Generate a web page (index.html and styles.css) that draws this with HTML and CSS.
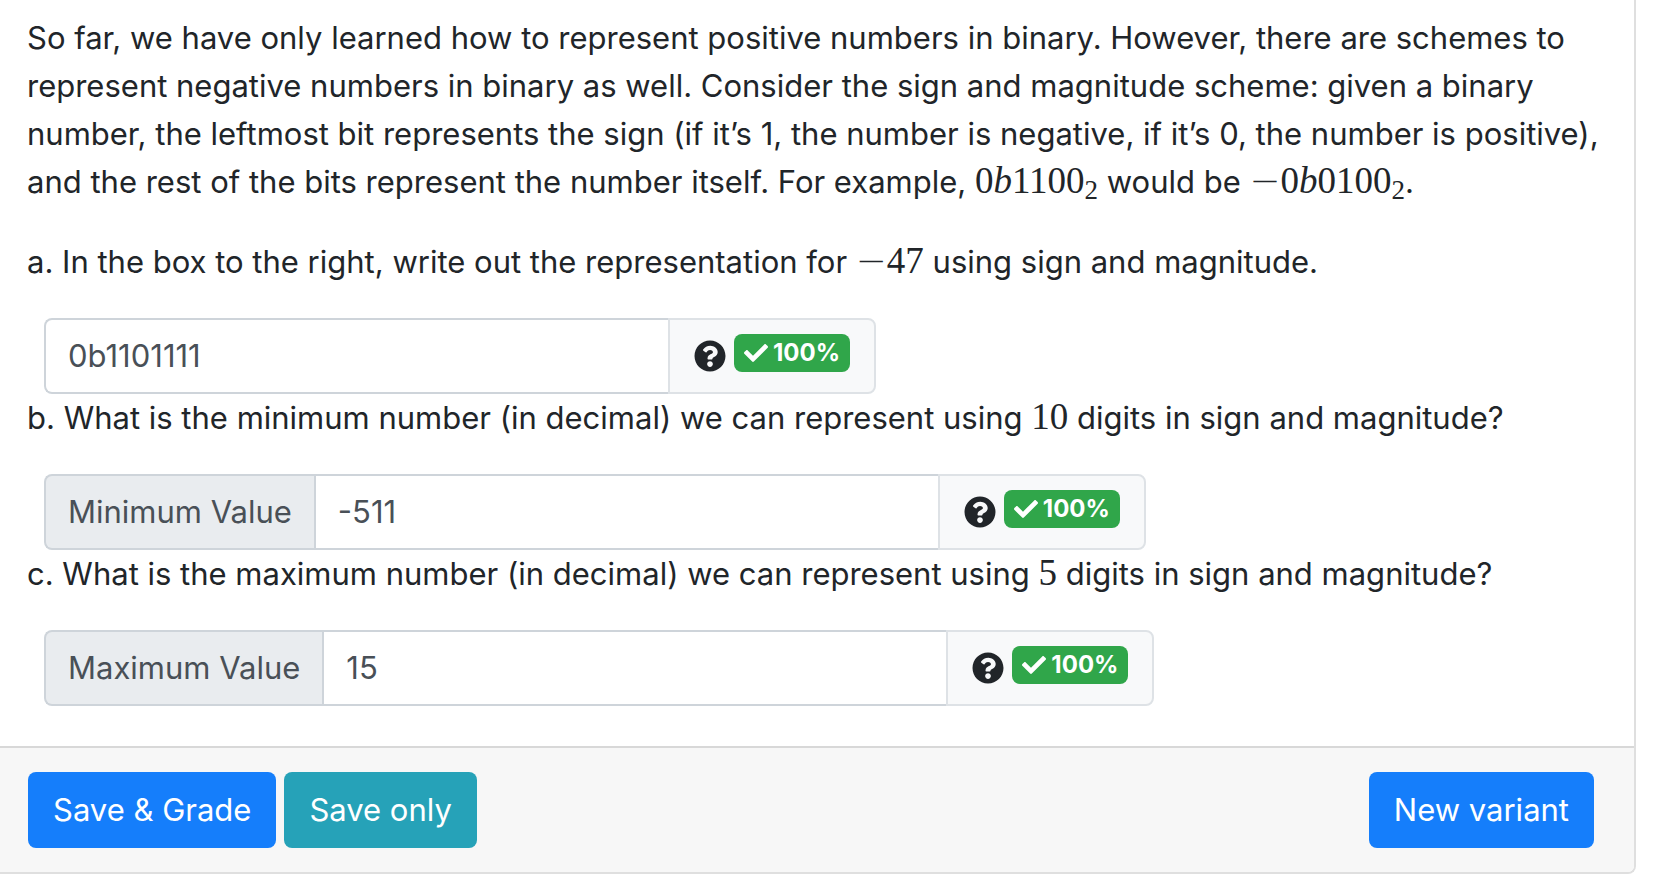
FILE: index.html
```
<!DOCTYPE html>
<html lang="en">
<head>
<meta charset="utf-8">
<title>Sign and magnitude</title>
<link rel="stylesheet" href="styles.css">
</head>
<body>
<svg class="sprite" aria-hidden="true">
  <symbol id="question" viewBox="0 0 512 512"><path d="M504 256c0 136.997-111.043 248-248 248S8 392.997 8 256C8 119.083 119.043 8 256 8s248 111.083 248 248zM262.655 90c-54.497 0-89.255 22.957-116.549 63.758-3.536 5.286-2.353 12.415 2.715 16.258l34.699 26.31c5.205 3.947 12.621 3.008 16.665-2.122 17.864-22.658 30.113-35.797 57.303-35.797 20.429 0 45.698 13.148 45.698 32.958 0 14.976-12.363 22.667-32.534 33.976C247.128 238.528 216 254.941 216 296v4c0 6.627 5.373 12 12 12h56c6.627 0 12-5.373 12-12v-1.333c0-28.462 83.186-29.647 83.186-106.667 0-58.002-60.165-102-116.531-102zM256 338c-25.365 0-46 20.635-46 46 0 25.364 20.635 46 46 46s46-20.636 46-46c0-25.365-20.635-46-46-46z"/></symbol>
  <symbol id="check" viewBox="0 0 512 512"><path d="M173.898 439.404l-166.4-166.4c-9.997-9.997-9.997-26.206 0-36.204l36.203-36.204c9.997-9.998 26.207-9.998 36.204 0L192 312.69 432.095 72.596c9.997-9.997 26.207-9.997 36.204 0l36.203 36.204c9.997 9.997 9.997 26.206 0 36.204l-294.4 294.401c-9.998 9.997-26.207 9.997-36.204-.001z"/></symbol>
</svg>
<form class="card">
  <div class="card-body">
    <p class="text">So far, we have only learned how to represent positive numbers in binary. However, there are schemes to represent negative numbers in binary as well. Consider the sign and magnitude scheme: given a binary number, the leftmost bit represents the sign (if it’s 1, the number is negative, if it’s 0, the number is positive), and the rest of the bits represent the number itself. For example, <span class="math">0<i>b</i>1100<sub>2</sub></span> would be <span class="math"><span class="minus">−</span>0<i>b</i>0100<sub>2</sub></span>.</p>

    <p class="text" id="qa">a. In the box to the right, write out the representation for <span class="math"><span class="minus">−</span>47</span> using sign and magnitude.</p>
    <div class="group">
      <input class="field" type="text" value="0b1101111" aria-labelledby="qa">
      <span class="suffix">
        <button class="help" type="button" aria-label="Help"><svg class="icon"><use href="#question"/></svg></button>
        <span class="badge"><svg class="check"><use href="#check"/></svg>100%</span>
      </span>
    </div>

    <p class="text">b. What is the minimum number (in decimal) we can represent using <span class="math">10</span> digits in sign and magnitude?</p>
    <div class="group">
      <label class="prefix" for="min">Minimum Value</label>
      <input class="field" type="text" id="min" value="-511">
      <span class="suffix">
        <button class="help" type="button" aria-label="Help"><svg class="icon"><use href="#question"/></svg></button>
        <span class="badge"><svg class="check"><use href="#check"/></svg>100%</span>
      </span>
    </div>

    <p class="text">c. What is the maximum number (in decimal) we can represent using <span class="math">5</span> digits in sign and magnitude?</p>
    <div class="group">
      <label class="prefix" for="max">Maximum Value</label>
      <input class="field" type="text" id="max" value="15">
      <span class="suffix">
        <button class="help" type="button" aria-label="Help"><svg class="icon"><use href="#question"/></svg></button>
        <span class="badge"><svg class="check"><use href="#check"/></svg>100%</span>
      </span>
    </div>
  </div>
  <div class="card-footer">
    <button class="btn primary" type="button">Save &amp; Grade</button>
    <button class="btn info" type="button">Save only</button>
    <button class="btn primary last" type="button">New variant</button>
  </div>
</form>
</body>
</html>
```
FILE: styles.css
```
* { box-sizing: border-box; }

body {
  margin: 0;
  background: #fff;
  color: #212529;
  font-family: Inter, sans-serif;
  font-size: 31px;
  line-height: 48px;
}

.sprite { display: none; }

.card {
  margin-right: 24px;
  border-right: 2px solid #dfdfdf;
  border-bottom: 2px solid #dfdfdf;
  border-bottom-right-radius: 8px;
}

.card-body { padding: 14px 24px 40px 27px; }

.text { margin: 0 0 32px; }

.math {
  font-family: "Liberation Serif", serif;
  font-size: 37px;
  line-height: 37px;
  white-space: nowrap;
}

.math sub {
  font-size: 27px;
  line-height: 27px;
  vertical-align: -6px;
}

.minus {
  font-family: "DejaVu Sans", sans-serif;
  font-weight: 200;
}

.group {
  display: flex;
  width: fit-content;
  height: 76px;
  margin-left: 17px;
}

.prefix, .field, .suffix {
  border: 2px solid #ced4da;
  color: #495057;
}

.prefix {
  display: flex;
  align-items: center;
  padding: 0 22px;
  background: #e9ecef;
  border-right: 0;
  border-radius: 8px 0 0 8px;
}

.field {
  width: 624px;
  padding: 0 22px;
  background: #fff;
  border-right: 0;
  border-radius: 0;
  font: inherit;
}

.field:first-child { border-radius: 8px 0 0 8px; }

.suffix {
  display: flex;
  gap: 8px;
  padding: 14px 24px;
  background: #f8f9fa;
  border-color: #dee2e6;
  border-radius: 0 8px 8px 0;
}

.help {
  display: flex;
  padding: 6px 0 0;
  border: 0;
  background: none;
  color: #212529;
}

.icon {
  width: 32px;
  height: 32px;
  fill: currentColor;
}

.badge {
  display: flex;
  align-items: center;
  gap: 5px;
  height: 38px;
  padding: 0 10px;
  border-radius: 8px;
  background: #30a64a;
  color: #fff;
  font-size: 24px;
  font-weight: 700;
  line-height: 24px;
}

.check {
  width: 24px;
  height: 24px;
  fill: currentColor;
}

.card-footer {
  display: flex;
  gap: 8px;
  padding: 24px 40px 24px 28px;
  border-top: 2px solid #d8d8d8;
  border-bottom-right-radius: 6px;
  background: #f7f7f7;
}

.btn {
  height: 76px;
  padding: 0 25px;
  border: 0;
  border-radius: 8px;
  color: #fff;
  font: inherit;
}

.primary { background: #157efb; }
.info { background: #26a2b8; }
.last { margin-left: auto; }
```
